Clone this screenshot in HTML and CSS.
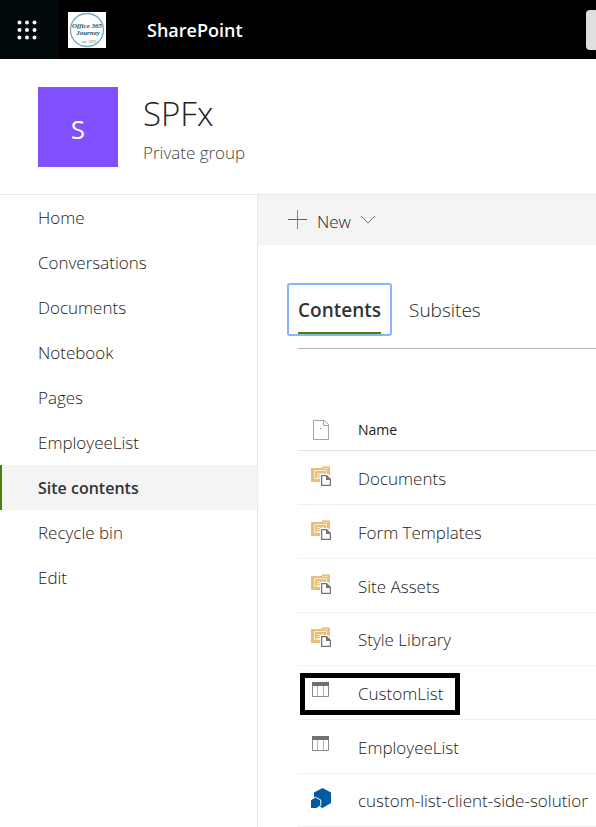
FILE: index.html
```html
<!DOCTYPE html>
<html lang="en">
<head>
<meta charset="utf-8">
<meta name="viewport" content="width=device-width, initial-scale=1">
<title>SPFx - Site contents</title>
<link rel="stylesheet" href="styles.css">
</head>
<body>
<svg class="sprites" aria-hidden="true">
  <symbol id="library" viewBox="0 0 20 20">
    <path fill="#f4d9ab" d="M11 0h8v4h-8z"/>
    <path fill="#e9be79" d="M0 2h10l2-1h7v15H0z"/>
    <path fill="#f5ddb4" d="M12 2h5v1h-5z"/>
    <path fill="none" stroke="#fbecd2" d="M3.500 12.500v-8h12v4M3.500 12.500h6"/>
    <path fill="none" stroke="#fbecd2" d="M6 7.500h3M10 7.500h3M6 9.500h3M6 11.500h3"/>
    <path fill="#fff" d="M9 8h8l3 3v9H9z"/>
    <path fill="#fff" stroke="#747474" stroke-width="1.300" d="M10.600 9.600h5l3.800 3.800v6h-8.800z"/>
    <path fill="#747474" d="M15 9l5 5h-5z"/>
  </symbol>
  <symbol id="list" viewBox="0 0 20 20">
    <path fill="#fff" stroke="#8a8a8a" d="M1.500 2.500h16v13h-16z"/>
    <path fill="#707070" d="M1 1h17v4H1z"/>
    <path fill="none" stroke="#b5b5b5" d="M6.500 5v10M12.500 5v10"/>
  </symbol>
  <symbol id="app" viewBox="0 0 20 20">
    <path fill="#005a9e" d="M11.500 0L20 4.500v10.500L11.500 20 3 15V4.500z"/>
    <path fill="#005a9e" stroke="#fff" d="M4.500 9.200l5.300 2.800v5.500l-4.500 3h-6V12z"/>
  </symbol>
</svg>

<header class="suite">
  <button class="waffle" aria-label="App launcher">
    <svg width="20" height="20" viewBox="0 0 20 20" fill="#fff"><circle cx="2.500" cy="2.500" r="2"/><circle cx="10" cy="2.500" r="2"/><circle cx="17.500" cy="2.500" r="2"/><circle cx="2.500" cy="10" r="2"/><circle cx="10" cy="10" r="2"/><circle cx="17.500" cy="10" r="2"/><circle cx="2.500" cy="17.500" r="2"/><circle cx="10" cy="17.500" r="2"/><circle cx="17.500" cy="17.500" r="2"/></svg>
  </button>
  <svg class="logo" viewBox="0 0 38 36" role="img" aria-label="Office 365 Journey">
    <path fill="#fff" d="M0 0h38v36H0z"/>
    <circle cx="19" cy="18" r="16.500" fill="none" stroke="#73aab3" stroke-width="1.300"/>
    <text x="19" y="16" class="logo-name">Office 365</text>
    <text x="20" y="23" class="logo-name">Journey</text>
    <text x="21" y="31" class="logo-date">est. 2019</text>
  </svg>
  <a class="product" href="#">SharePoint</a>
  <button class="search" aria-label="Search"></button>
</header>

<section class="site">
  <div class="site-tile">S</div>
  <div>
    <h1 class="site-name">SPFx</h1>
    <p class="site-kind">Private group</p>
  </div>
</section>

<div class="layout">
  <nav class="nav">
    <a href="#">Home</a>
    <a href="#">Conversations</a>
    <a href="#">Documents</a>
    <a href="#">Notebook</a>
    <a href="#">Pages</a>
    <a href="#">EmployeeList</a>
    <a href="#" class="current" aria-current="page">Site contents</a>
    <a href="#">Recycle bin</a>
    <a href="#">Edit</a>
  </nav>
  <main class="main">
    <div class="commands">
      <button class="new">
        <svg width="20" height="20" viewBox="0 0 20 20" fill="none"><path stroke="#6f9850" d="M9.500 0v19"/><path stroke="#498205" d="M0 9.500h19"/></svg>
        <span>New</span>
        <svg width="16" height="10" viewBox="0 0 16 10" fill="none" stroke="#777"><path d="M1 1l7 7 7-7"/></svg>
      </button>
    </div>
    <div class="tabs" role="tablist">
      <button class="tab active" role="tab" aria-selected="true"><span>Contents</span></button>
      <button class="tab" role="tab" aria-selected="false"><span>Subsites</span></button>
    </div>
    <table class="items">
      <thead>
        <tr>
          <th class="type"><svg width="20" height="20" viewBox="0 0 20 20" role="img" aria-label="Type"><path fill="#fff" stroke="#a7a3a2" d="M2.500.5h11l4 4v15h-15zM12.500.5v5h5"/><path fill="#a65b3a" d="M9 8h1v1H9z"/></svg></th>
          <th>Name</th>
        </tr>
      </thead>
      <tbody>
        <tr><td class="type"><svg class="icon"><use href="#library"/></svg></td><td><a href="#">Documents</a></td></tr>
        <tr><td class="type"><svg class="icon"><use href="#library"/></svg></td><td><a href="#">Form Templates</a></td></tr>
        <tr><td class="type"><svg class="icon"><use href="#library"/></svg></td><td><a href="#">Site Assets</a></td></tr>
        <tr><td class="type"><svg class="icon"><use href="#library"/></svg></td><td><a href="#">Style Library</a></td></tr>
        <tr><td class="type marked"><svg class="icon"><use href="#list"/></svg></td><td><a href="#">CustomList</a></td></tr>
        <tr><td class="type"><svg class="icon"><use href="#list"/></svg></td><td><a href="#">EmployeeList</a></td></tr>
        <tr><td class="type"><svg class="icon"><use href="#app"/></svg></td><td><a href="#">custom-list-client-side-solution</a></td></tr>
      </tbody>
    </table>
  </main>
</div>
</body>
</html>
```
FILE: styles.css
```css
* { box-sizing: border-box; }
body {
  margin: 0;
  min-height: 100vh;
  display: flex;
  flex-direction: column;
  font-family: "Open Sans", "Noto Sans", sans-serif;
  font-size: 17px;
  font-weight: 300;
  line-height: 24px;
  color: #222;
  background: #fff;
}
a { color: inherit; text-decoration: none; }
button { font: inherit; color: inherit; border: 0; background: none; padding: 0; }
svg { display: block; }
.sprites { position: absolute; width: 0; height: 0; }

.suite { display: flex; align-items: center; height: 59px; background: #000; color: #fff; }
.waffle { width: 58px; height: 59px; padding-right: 4px; background: #02090b; display: grid; place-items: center; }
.logo { width: 38px; height: 36px; margin-left: 10px; }
.logo-name { font: italic bold 7px "Liberation Serif", serif; fill: #29515d; text-anchor: middle; }
.logo-date { font: italic 4px "Liberation Serif", serif; fill: #4d7078; text-anchor: middle; }
.product { margin-left: 41px; font-size: 18px; font-weight: 600; }
.search { margin-left: auto; width: 10px; height: 40px; border-radius: 4px 0 0 4px; background: #e1dfdd; }

.site { display: flex; gap: 25px; height: 136px; padding: 28px 38px; border-bottom: 1px solid #eaeaea; }
.site-tile { width: 80px; height: 80px; padding-top: 3px; background: #8250ff; color: #fff; font-size: 26px; font-weight: 400; display: grid; place-items: center; }
.site-name { margin: 3px 0 0; font-size: 33px; line-height: 48px; font-weight: 300; }
.site-kind { margin: 3px 0 0; color: #444; }

.layout { flex: 1; display: flex; }
.nav { flex: 0 0 258px; border-right: 1px solid #eaeaea; }
.nav a { display: block; padding: 11px 38px 10px; }
.nav .current { background: #f4f4f4; box-shadow: inset 2px 0 #498205; font-size: 16px; font-weight: 600; color: #333; }

.main { flex: 1; min-width: 0; }
.commands { height: 50px; padding: 0 30px; background: #f4f4f4; display: flex; align-items: center; }
.new { display: flex; align-items: center; gap: 9px; }
.new span { padding-top: 4px; }
.tabs { display: flex; gap: 8px; margin: 39px 0 0 40px; height: 65px; border-bottom: 1px solid #b5b5b5; align-items: flex-start; }
.tab { height: 51px; padding: 0 10px; font-size: 19px; }
.tab span { display: block; height: 50px; line-height: 50px; }
.tab.active { margin-left: -10px; font-weight: 600; color: #333; outline: 2px solid #8ab4f8; outline-offset: -1px; border-radius: 2px; }
.tab.active span { border-bottom: 3px solid #498205; }

.items { width: calc(100% - 40px); margin: 60px 0 0 40px; border-collapse: separate; border-spacing: 0; table-layout: fixed; }
.items tr { height: 54px; }
.items tbody tr:nth-child(3n+4) { height: 53px; }
.items thead tr { height: 42px; }
.items th, .items td { padding: 0; text-align: left; vertical-align: middle; border-bottom: 1px solid #f0f0f0; }
.items th { border-bottom-color: #e4e4e4; font-size: 14px; font-weight: 400; }
.items .type { width: 60px; padding-left: 13px; }
.items td:last-child { padding: 2px 8px 0 0; }
.items a { display: block; overflow: hidden; white-space: nowrap; }
.icon { width: 20px; height: 20px; margin-bottom: 4px; overflow: visible; }
.marked { position: relative; }
.marked::after { content: ""; position: absolute; left: 2px; top: 7px; width: 150px; height: 32px; border: 5px solid #000; }
```
